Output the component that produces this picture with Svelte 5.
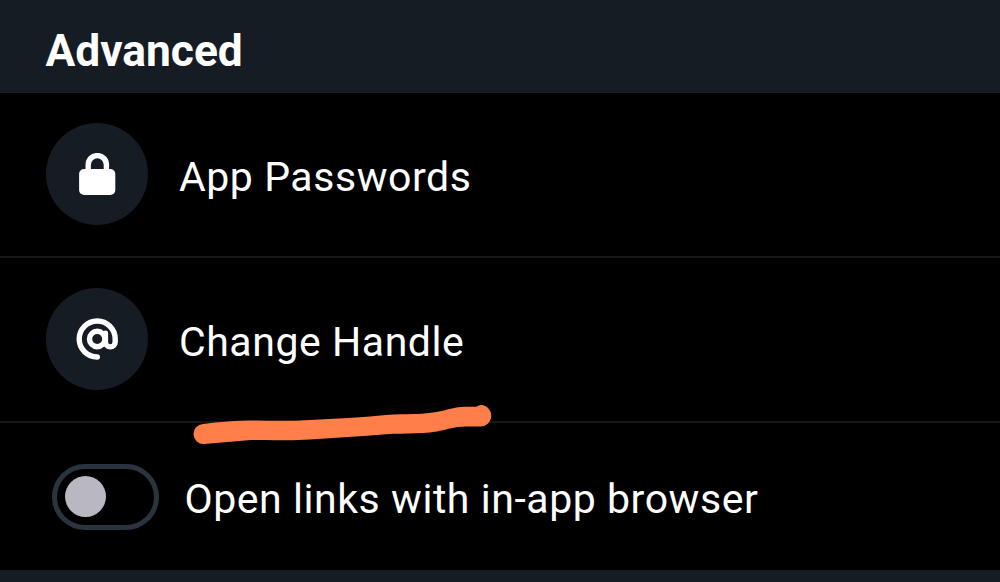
<script lang="ts">
let in_app_browser = $state(false);

const toggle = () => {
  in_app_browser = !in_app_browser;
}
</script>

<main>
  <h2>Advanced</h2>
  <button class="row">
    <span class="icon_wrap">
      <svg class="lock" viewBox="0 0 42 42" aria-hidden="true">
        <path d="M12.2 20 V11.7 a9.100 9.100 0 0 1 18.2 0 V20" fill="none" stroke="#fff" stroke-width="5.4" />
        <rect x="3.100" y="16" width="36.2" height="26" rx="5" fill="#fff" />
      </svg>
    </span>
    <span class="label">App Passwords</span>
  </button>
  <button class="row handle">
    <span class="icon_wrap">
      <svg viewBox="0 0 42 42" fill="none" stroke="#fff" stroke-width="5.4" stroke-linecap="round" stroke-linejoin="round" aria-hidden="true">
        <path d="M21.3 39 A18 18 0 1 1 39.2 21 V24 a4.9 4.9 0 0 1 -9.8 0 V15.2" />
        <circle cx="21.2" cy="21" r="7.7" />
      </svg>
    </span>
    <span class="label">Change Handle</span>
    <svg class="marker" viewBox="0 0 310 48" aria-hidden="true">
      <path d="M13 24 C30 22 45 20.500 66 20.500 C85 21 103 21 120 20 C145 18.500 171 17.500 196 15 C216 13.500 233 15.500 254 10.500 C268 6.500 270 6.700 286 6.700 Q289 5 291 5 A10 10 0 0 1 290 26.500 C270 26.500 267 26.500 254 30 C235 34.500 216 33 196 34.200 C171 36 145 38 120 39.500 C97 41 80 39.500 61 40 C45 41 30 43 14 44 A10 10 0 0 1 13 24 Z" fill="#ff7e4a" />
    </svg>
  </button>
  <button class="row switch_row" role="switch" aria-checked={in_app_browser} onclick={toggle}>
    <span class={`switch ${in_app_browser ? 'on' : ''}`}>
      <span class="knob"></span>
    </span>
    <span class="label">Open links with in-app browser</span>
  </button>
  <footer></footer>
</main>

<style>
:global(body) {
  margin: 0;
  background: #000;
}
main {
  display: flex;
  flex-direction: column;
  height: 582px;
  overflow: hidden;
  background: #000;
  color: #fff;
  font-family: Roboto, "Liberation Sans", sans-serif;
}
h2 {
  box-sizing: border-box;
  height: 93px;
  margin: 0;
  padding: 21px 45.5px 0;
  background: #161c24;
  font-size: 44.3px;
  font-weight: 700;
  line-height: 60px;
}
.row {
  display: flex;
  align-items: center;
  box-sizing: border-box;
  position: relative;
  flex: none;
  height: 165px;
  padding: 0 46px;
  gap: 31px;
  border: none;
  border-bottom: 2px solid #15171b;
  background: none;
  color: inherit;
  font: inherit;
  text-align: left;
}
.icon_wrap {
  display: flex;
  align-items: center;
  justify-content: center;
  flex: none;
  width: 102px;
  height: 102px;
  margin-bottom: 1px;
  border-radius: 50%;
  background: #161c24;
}
.icon_wrap svg {
  width: 42px;
  height: 42px;
}
.label {
  padding-top: 5px;
  font-size: 41px;
  line-height: 50px;
  letter-spacing: 0.55px;
  white-space: nowrap;
}
.marker {
  position: absolute;
  left: 189.5px;
  top: 142px;
  z-index: 1;
  width: 310px;
  height: 48px;
}
.switch_row {
  height: 147px;
  padding-left: 52px;
  gap: 25.5px;
  border-bottom: none;
}
.switch {
  display: flex;
  align-items: center;
  box-sizing: border-box;
  flex: none;
  width: 107px;
  height: 66px;
  padding: 0 8px;
  border: 5px solid #2a343f;
  border-radius: 33px;
}
.switch.on {
  justify-content: flex-end;
}
.knob {
  width: 41px;
  height: 41px;
  border-radius: 50%;
  background: #b9b8c2;
}
footer {
  flex: 1;
  background: #161c24;
}
</style>
